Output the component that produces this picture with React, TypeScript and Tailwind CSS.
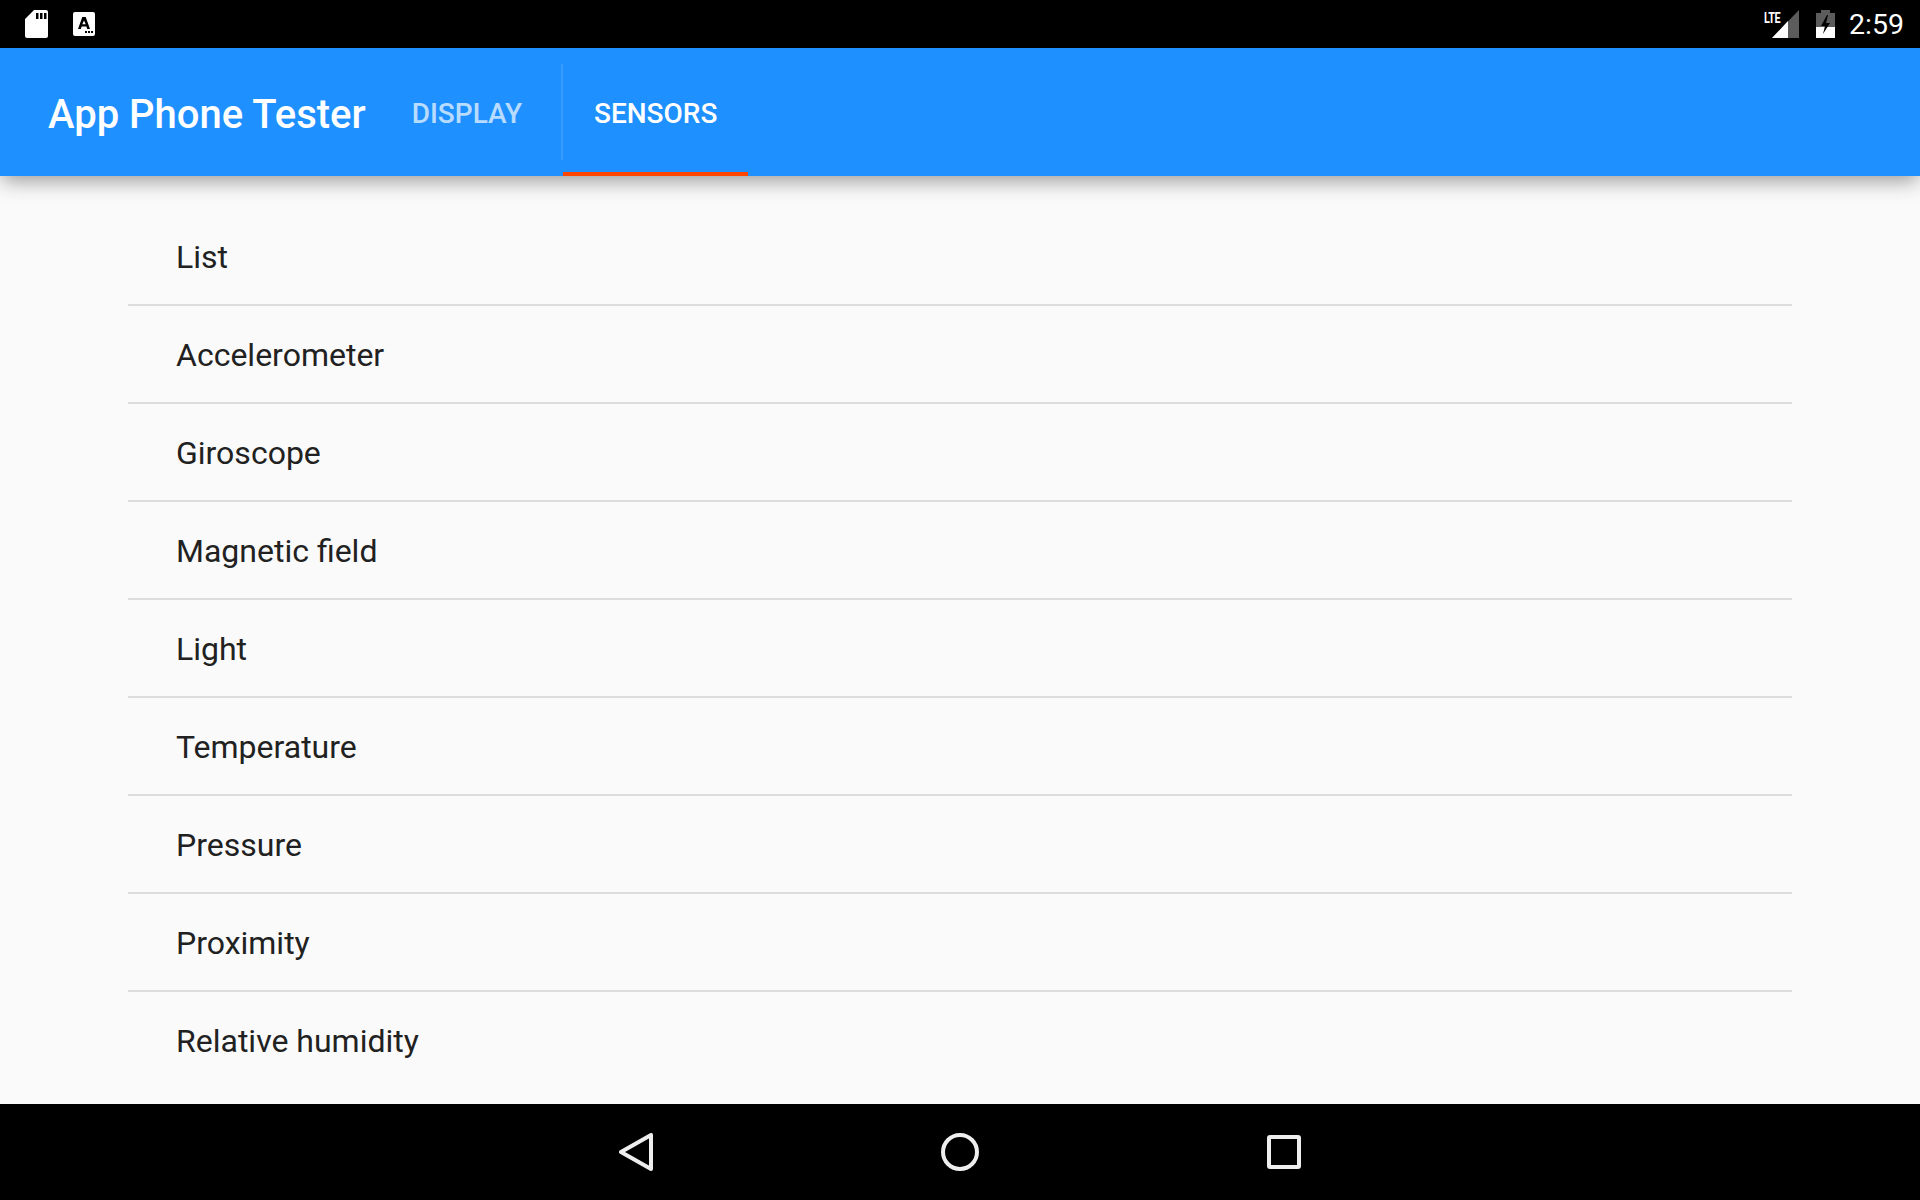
const items = [
  "List",
  "Accelerometer",
  "Giroscope",
  "Magnetic field",
  "Light",
  "Temperature",
  "Pressure",
  "Proximity",
  "Relative humidity",
];

function StatusBar() {
  return (
    <div className="flex h-12 shrink-0 items-center justify-between bg-black pl-[25px] pr-4 text-white">
      <div className="flex items-center gap-[25px]">
        {/* sd card */}
        <svg width="23" height="28" viewBox="0 0 23 28" className="block">
          <path
            fill="#fff"
            fillRule="evenodd"
            d="M9 0h12a2 2 0 0 1 2 2v24a2 2 0 0 1-2 2H2a2 2 0 0 1-2-2V9zM11 3v6h2.500V3zM15 3v6h2.500V3zM19 3v6h2.500V3z"
          />
        </svg>
        {/* keyboard language */}
        <svg width="22" height="24" viewBox="0 0 22 24" className="block">
          <path
            fill="#fff"
            fillRule="evenodd"
            d="M2 0h18a2 2 0 0 1 2 2v20a2 2 0 0 1-2 2H2a2 2 0 0 1-2-2V2a2 2 0 0 1 2-2zM9.300 5 5 17h2.800l.8-2.600h4.800l.8 2.600h2.800L12.700 5zM11 8.500l1.700 3.700H9.300zM12 19v2h2v-2zM15 19v2h2v-2zM18 19v2h2v-2z"
          />
        </svg>
      </div>
      <div className="flex items-center">
        <div className="relative h-7 w-[35px]">
          <span className="absolute left-0 top-[1px] font-['Roboto',sans-serif] text-[15px] font-bold leading-[15px] tracking-[-0.5px] [transform:scaleX(0.72)] [transform-origin:left]">
            LTE
          </span>
          <svg width="27" height="28" viewBox="0 0 27 28" className="absolute left-2 top-0">
            <path fill="#fff" fillOpacity="0.36" d="M27 0v28H0z" />
            <path fill="#fff" d="M16 11v17H0z" />
          </svg>
        </div>
        <svg width="19" height="28" viewBox="0 0 19 28" className="ml-[17px] block">
          <path fill="#fff" fillOpacity="0.36" d="M5 3V0h9v3h5v14H0V3z" />
          <path fill="#fff" d="M0 17h19v11H0z" />
          <path fill="#000" d="M11 5 5 16h4l-2 8 7-11h-4l2-8z" />
        </svg>
        <span className="ml-[14px] pt-[2px] font-['Roboto',sans-serif] text-[28.5px] leading-none">2:59</span>
      </div>
    </div>
  );
}

function AppBar() {
  return (
    <header className="relative z-10 flex h-32 shrink-0 bg-[#1e90ff] pl-12 shadow-[0_6px_20px_-2px_rgba(0,0,0,0.42)] font-['Roboto',sans-serif]">
      <h1 className="self-center pt-[5px] text-[40px] font-medium leading-none text-white">App Phone Tester</h1>
      <div className="ml-[46px] flex">
        <div className="flex items-center pr-[39px] pt-1 text-[28px] font-medium text-white/70">DISPLAY</div>
        <div className="my-4 h-24 w-0.5 bg-white/12" />
        <div className="relative flex w-[185px] items-center justify-center pt-1 text-[28px] font-medium text-white">
          SENSORS
          <span className="absolute inset-x-0 bottom-0 h-1 bg-[#ff4500]" />
        </div>
      </div>
    </header>
  );
}

function NavBar() {
  return (
    <div className="flex h-24 shrink-0 items-center justify-center bg-black">
      <div className="flex items-center gap-[288px]">
        <svg width="34" height="38" viewBox="0 0 34 38" fill="none" stroke="#eee" strokeWidth="4" strokeLinejoin="round">
          <path d="M32 2v34L2 19z" />
        </svg>
        <svg width="38" height="38" viewBox="0 0 38 38" fill="none" stroke="#eee" strokeWidth="4">
          <circle cx="19" cy="19" r="17" />
        </svg>
        <svg width="34" height="34" viewBox="0 0 34 34" fill="none" stroke="#eee" strokeWidth="4" strokeLinejoin="round">
          <rect x="2" y="2" width="30" height="30" rx="1" />
        </svg>
      </div>
    </div>
  );
}

export default function App() {
  return (
    <div className="flex h-[1200px] w-[1920px] flex-col overflow-hidden bg-[#fafafa]">
      <StatusBar />
      <AppBar />
      <main className="min-h-0 flex-1 overflow-hidden px-32 pt-8 font-['Roboto',sans-serif]">
        <ul>
          {items.map((item) => (
            <li
              key={item}
              className="flex h-[98px] items-center border-b-2 border-[#dcdcdc] pl-12 pt-[2px] text-[32px] text-[#212121] last:border-transparent"
            >
              {item}
            </li>
          ))}
        </ul>
      </main>
      <NavBar />
    </div>
  );
}
